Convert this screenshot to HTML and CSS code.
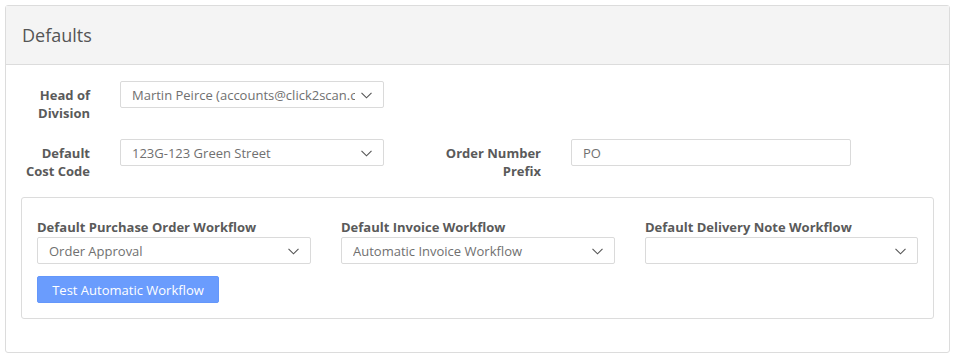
FILE: index.html
```html
<!DOCTYPE html>
<html>
<head>
<meta charset="utf-8">
<link rel="stylesheet" href="styles.css">
</head>
<body>
<div class="panel">
  <div class="panel-heading">Defaults</div>
  <div class="panel-body">
    <div class="row">
      <label class="lbl lbl-a">Head of Division</label>
      <div class="select w-a"><span class="val">Martin Peirce (accounts@click2scan.com)</span><svg class="chev" width="11" height="7" viewBox="0 0 11 7"><path d="M0.5 0.8 L5.5 5.8 L10.5 0.8" fill="none" stroke="#555" stroke-width="1.1"/></svg></div>
    </div>
    <div class="row">
      <label class="lbl lbl-a">Default Cost Code</label>
      <div class="select w-a"><span class="val">123G-123 Green Street</span><svg class="chev" width="11" height="7" viewBox="0 0 11 7"><path d="M0.5 0.8 L5.5 5.8 L10.5 0.8" fill="none" stroke="#555" stroke-width="1.1"/></svg></div>
      <label class="lbl lbl-b">Order Number Prefix</label>
      <div class="input w-b">PO</div>
    </div>
    <div class="box">
      <div class="grid3">
        <div class="col">
          <div class="lbl2">Default Purchase Order Workflow</div>
          <div class="select"><span class="val">Order Approval</span><svg class="chev" width="11" height="7" viewBox="0 0 11 7"><path d="M0.5 0.8 L5.5 5.8 L10.5 0.8" fill="none" stroke="#555" stroke-width="1.1"/></svg></div>
        </div>
        <div class="col">
          <div class="lbl2">Default Invoice Workflow</div>
          <div class="select"><span class="val">Automatic Invoice Workflow</span><svg class="chev" width="11" height="7" viewBox="0 0 11 7"><path d="M0.5 0.8 L5.5 5.8 L10.5 0.8" fill="none" stroke="#555" stroke-width="1.1"/></svg></div>
        </div>
        <div class="col">
          <div class="lbl2">Default Delivery Note Workflow</div>
          <div class="select"><span class="val"></span><svg class="chev" width="11" height="7" viewBox="0 0 11 7"><path d="M0.5 0.8 L5.5 5.8 L10.5 0.8" fill="none" stroke="#555" stroke-width="1.1"/></svg></div>
        </div>
      </div>
      <button class="btn">Test Automatic Workflow</button>
    </div>
  </div>
</div>
</body>
</html>
```
FILE: styles.css
```css
* { box-sizing: border-box; }
html, body { margin: 0; padding: 0; background: #fff; }
body {
  padding: 5px 6px 0 5px;
  font-family: "Open Sans", "Noto Sans", sans-serif;
  font-size: 13px;
  color: #555;
}
.panel {
  width: 945px;
  height: 348px;
  border: 1px solid #dcdcdc;
  border-radius: 3px;
}
.panel-heading {
  height: 59px;
  background: #f4f4f4;
  border-bottom: 1px solid #dcdcdc;
  padding: 17px 16px 0;
  font-size: 18px;
  line-height: 24px;
  color: #555;
}
.panel-body {
  padding: 16px 15px 0;
}
.row {
  display: flex;
  align-items: flex-start;
  margin-bottom: 17px;
}
.lbl {
  font-weight: 700;
  font-size: 13px;
  line-height: 18px;
  color: #5a5a5a;
  text-align: right;
  padding-top: 5px;
}
.lbl-a { width: 69px; margin-right: 30px; }
.lbl-b { width: 100px; margin-left: 57px; margin-right: 30px; }
.w-a { width: 264px; }
.w-b { width: 280px; }
.select, .input {
  height: 27px;
  border: 1px solid #dadada;
  border-radius: 2px;
  background: #fff;
  display: flex;
  align-items: center;
  padding: 0 11px;
  color: #707070;
  font-size: 13px;
}
.select .val {
  flex: 1;
  white-space: nowrap;
  overflow: hidden;
  min-width: 0;
  margin-right: 6px;
}
.chev { flex: none; margin-top: 1px; }
.box {
  border: 1px solid #dcdcdc;
  border-radius: 3px;
  padding: 20px 15px 15px 15px;
  margin-top: 17px;
}
.grid3 {
  display: grid;
  grid-template-columns: 274px 274px 273px;
  column-gap: 30px;
}
.lbl2 {
  font-weight: 700;
  font-size: 13px;
  line-height: 18px;
  color: #5a5a5a;
  margin-bottom: 1px;
}
.btn {
  margin-top: 12px;
  width: 182px;
  height: 27px;
  background: #6a9cfd;
  border: 1px solid #6497fb;
  border-radius: 2px;
  color: #fff;
  font-family: "Open Sans", "Noto Sans", sans-serif;
  font-size: 13px;
  padding: 0;
}
```
